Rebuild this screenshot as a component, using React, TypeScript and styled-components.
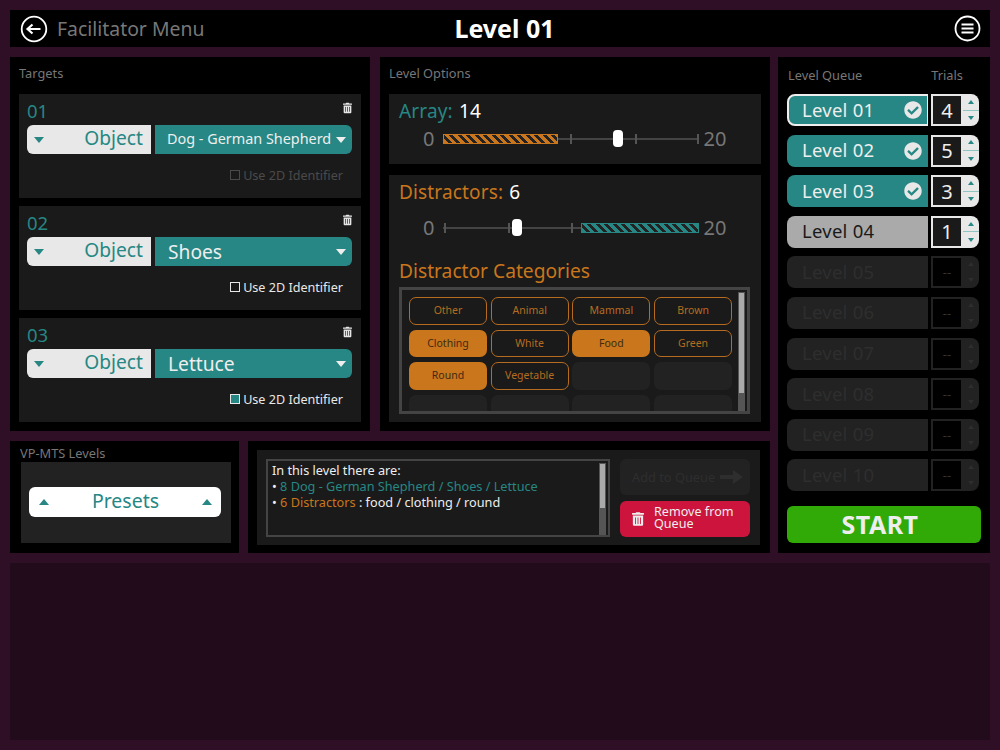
import React from "react";
import styled, { createGlobalStyle } from "styled-components";
import { FaCheckCircle, FaTrashAlt } from "react-icons/fa";

const TEAL = "#268784";
const ORANGE = "#c9761c";

const Global = createGlobalStyle`
  html, body { margin: 0; padding: 0; background: #2e0f26; }
  body { font-family: "Noto Sans", "Open Sans", sans-serif; }
  * { box-sizing: border-box; }
`;

const Page = styled.div`
  width: 1000px; height: 750px; padding: 10px; display: flex; flex-direction: column; gap: 10px;
  background: #2e0f26; overflow: hidden;
`;
const Header = styled.header`
  height: 37px; flex: none; background: #000; display: grid; grid-template-columns: 1fr auto 1fr;
  align-items: center; padding: 0 9px 0 10px;
`;
const HeaderLeft = styled.div`display: flex; align-items: center; gap: 9px;`;
const BackLabel = styled.span`color: #777; font-size: 19.4px;`;
const HeaderTitle = styled.h1`margin: 0 0 0 8px; color: #fff; font-size: 25px; font-weight: 700; line-height: 37px;`;
const HeaderRight = styled.div`display: flex; justify-content: flex-end;`;

const Main = styled.div`display: grid; grid-template-columns: 760px 212px; column-gap: 8px; height: 496px; flex: none;`;
const LeftCol = styled.div`display: flex; flex-direction: column; gap: 10px;`;
const TopRow = styled.div`display: flex; gap: 10px; height: 374px;`;
const BottomRow = styled.div`display: flex; gap: 9px; height: 112px;`;
const Panel = styled.section<{ $w: number }>`
  width: ${p => p.$w}px; flex: none; background: #000; padding: 0 9px; display: flex; flex-direction: column;
`;
const PanelTitle = styled.div`height: 37px; line-height: 33px; color: #777; font-size: 12.8px;`;
const Stack = styled.div`display: flex; flex-direction: column; gap: 8px;`;

const TargetCard = styled.div`height: 104px; background: #1a1a1a; padding: 5px 9px 0 8px;`;
const CardHead = styled.div`display: flex; justify-content: space-between; align-items: flex-start; height: 26px;`;
const CardNum = styled.span`color: ${TEAL}; font-size: 18.5px; line-height: 23px;`;
const TrashIcon = styled(FaTrashAlt)`color: #e6e6e6; width: 9px; height: 12px; margin-top: 3px;`;
const SelectRow = styled.div`display: flex; gap: 4px; height: 29px;`;
const ObjectSelect = styled.div`
  width: 124px; background: #e8e8e8; border-radius: 6px 0 0 6px; display: flex; align-items: center;
  justify-content: space-between; padding: 0 8px 4px 7px; color: ${TEAL}; font-size: 19.2px;
  & > span { margin-top: 4px; }
`;
const ValueSelect = styled.div<{ $small?: boolean }>`
  flex: 1; background: ${TEAL}; border-radius: 0 6px 6px 0; display: flex; align-items: center;
  justify-content: space-between; padding: 0 6px ${p => (p.$small ? 3 : 0)}px ${p => (p.$small ? 12 : 13)}px; color: #eee; white-space: nowrap;
  font-size: ${p => (p.$small ? 14.4 : 19.2)}px;
  & > span { margin-top: ${p => (p.$small ? 3 : 0)}px; }
`;
const Caret = styled.span<{ $color: string; $up?: boolean; $w?: number; $h?: number }>`
  display: block; width: 0; height: 0; flex: none;
  border-left: ${p => p.$w ?? 5}px solid transparent; border-right: ${p => p.$w ?? 5}px solid transparent;
  ${p => (p.$up ? "border-bottom" : "border-top")}: ${p => p.$h ?? 6}px solid ${p => p.$color};
`;
const CheckRow = styled.div<{ $dim?: boolean }>`
  display: flex; justify-content: flex-end; align-items: center; gap: 3px; height: 22px; margin-top: 10px; padding-right: 9px;
  color: ${p => (p.$dim ? "#4a4a4a" : "#e8e8e8")}; font-size: 12.6px;
`;
const CheckBox = styled.span<{ $dim?: boolean; $on?: boolean }>`
  width: 10px; height: 10px; border: 1.5px solid ${p => (p.$dim ? "#4a4a4a" : "#e8e8e8")};
  background: ${p => (p.$on ? TEAL : "transparent")};
`;

const OptionCard = styled.div<{ $h: number; $gap?: boolean }>`
  height: ${p => p.$h}px; background: #1a1a1a; padding: 4px 10px 0 10px;
  margin-top: ${p => (p.$gap ? 11 : 0)}px; display: flex; flex-direction: column;
`;
const OptionTitle = styled.div<{ $color: string }>`
  color: ${p => p.$color}; font-size: 19px; line-height: 26px; letter-spacing: 0.15px;
  & b { font-weight: 400; color: #fff; margin-left: 1px; }
`;
const SliderRow = styled.div<{ $low?: boolean }>`
  display: flex; align-items: center; height: 26px; margin-top: ${p => (p.$low ? 10 : 2)}px; padding-left: 24px;
`;
const SliderEnd = styled.span`color: #777; font-size: 20px; line-height: 26px;`;
const Track = styled.div`position: relative; width: 255px; height: 20px; margin: 0 5px 0 9px;
  &::before { content: ""; position: absolute; left: 0; right: 0; top: 9px; height: 2px; background: #444; }
`;
const Tick = styled.span<{ $x: number }>`position: absolute; left: ${p => p.$x}px; top: 5px; width: 1.5px; height: 10px; background: #555;`;
const Fill = styled.span<{ $x: number; $w: number; $color: string }>`
  position: absolute; left: ${p => p.$x}px; width: ${p => p.$w}px; top: 5px; height: 10px;
  border: 1px solid ${p => p.$color};
  background: repeating-linear-gradient(45deg, ${p => p.$color} 0 3px, #222 3px 6px);
`;
const Thumb = styled.span<{ $x: number }>`
  position: absolute; left: ${p => p.$x}px; top: 1px; width: 10px; height: 17px; border-radius: 4px; background: #fff;
`;
const CategoryTitle = styled.div`color: ${ORANGE}; font-size: 19.2px; line-height: 28px; margin-top: 16px;`;
const CategoryBox = styled.div`
  width: 351px; height: 127px; margin-top: 2px; border: 3px solid #444; padding: 7px 0 0 7px; position: relative; overflow: hidden;
`;
const ChipGrid = styled.div`display: grid; grid-template-columns: repeat(4, 78px); grid-auto-rows: 27.7px; column-gap: 3.7px; row-gap: 5px;`;
const Chip = styled.div<{ $on?: boolean; $empty?: boolean }>`
  border-radius: 7px; display: flex; align-items: center; justify-content: center; font-size: 10.5px; padding-bottom: 2px;
  color: ${p => (p.$on ? "#3f2a12" : "#b56c20")};
  background: ${p => (p.$on ? ORANGE : p.$empty ? "#222" : "transparent")};
  border: ${p => (p.$on || p.$empty ? "none" : "1.5px solid #b56c20")};
`;
const Scrollbar = styled.div<{ $thumb: number }>`
  position: absolute; right: 2px; top: 2px; bottom: 0; width: 7px; background: #555;
  &::after { content: ""; position: absolute; left: 1px; right: 1px; top: 1px; height: ${p => p.$thumb}px; background: #aaa; }
`;

const QueueList = styled.div`display: flex; flex-direction: column; gap: 8.6px;`;
const QueueHead = styled.div`display: flex; justify-content: space-between; height: 37px; line-height: 37px; color: #777; font-size: 12.8px; padding-right: 18px; padding-left: 1px;`;
const QueueRow = styled.div`display: flex; height: 32px; gap: 3px; width: 192px;`;
const LevelButton = styled.div<{ $kind: "done" | "active" | "current" | "off" }>`
  width: 141px; display: flex; align-items: center; justify-content: space-between; padding: 0 6px 2px 15px; font-size: 18.5px;
  border-radius: 8px 0 0 8px; letter-spacing: 0.25px;
  background: ${p => (p.$kind === "off" ? "#222" : p.$kind === "current" ? "#aaa" : TEAL)};
  color: ${p => (p.$kind === "off" ? "#2e2e2e" : p.$kind === "current" ? "#1a1a1a" : "#eee")};
  ${p => (p.$kind === "active" ? "border: 2px solid #eee; border-right-width: 1px; padding: 0 5px 2px 13px;" : "")}
  & > svg { margin-top: 2px; }
`;
const DoneIcon = styled(FaCheckCircle)`color: #e8e8e8; width: 18px; height: 18px;`;
const Stepper = styled.div<{ $off?: boolean }>`
  width: 48px; display: flex; border-radius: 0 8px 8px 0; overflow: hidden; background: ${p => (p.$off ? "#222" : "#e8e8e8")};
`;
const StepValue = styled.div<{ $off?: boolean }>`
  width: 32px; border: 2px solid ${p => (p.$off ? "#222" : "#e8e8e8")}; background: ${p => (p.$off ? "#000" : "#1a1a1a")};
  color: ${p => (p.$off ? "#333" : "#eee")}; font-size: ${p => (p.$off ? 13 : 20)}px; display: flex; align-items: center; justify-content: center;
`;
const StepArrows = styled.div`flex: 1; display: flex; flex-direction: column;`;
const StepArrow = styled.div<{ $line?: boolean }>`
  flex: 1; display: flex; align-items: center; justify-content: center; border-bottom: ${p => (p.$line ? "1px solid #8fc4c2" : "none")};
`;
const StartButton = styled.div`
  margin-top: 15px; width: 194px; height: 37px; background: #31a906; border-radius: 6px; color: #eee; font-size: 25px; font-weight: 700;
  display: flex; align-items: center; justify-content: center; padding: 0 8px 2px 0; letter-spacing: 0.5px;
`;

const PresetPanel = styled.section`width: 229px; background: #000; padding: 0 8px 10px 11px; display: flex; flex-direction: column;`;
const PresetTitle = styled.div`height: 21px; line-height: 25px; color: #777; font-size: 12.8px; margin-left: -1px;`;
const PresetCard = styled.div`flex: 1; background: #222; display: flex; align-items: center; padding: 0 10px 2px 8px;`;
const PresetButton = styled.div`
  width: 192px; height: 30px; background: #fff; border-radius: 6px; display: flex; align-items: center; justify-content: space-between;
  padding: 0 9px 2px 10px; color: ${TEAL}; font-size: 19.5px;
  & > span { margin-top: 3px; }
`;
const InfoPanel = styled.section`width: 522px; background: #000; padding: 9px 10px 8px 9px; display: flex;`;
const InfoCard = styled.div`flex: 1; background: #1a1a1a; display: flex; padding: 9px 9px 8px 9px; gap: 10px;`;
const InfoBox = styled.div`
  width: 344px; border: 2px solid #444; position: relative; padding: 1px 4px; color: #eee; font-size: 12.7px; line-height: 16px;
`;
const InfoText = styled.span<{ $color: string }>`color: ${p => p.$color};`;
const Actions = styled.div`width: 130px; flex: none; display: flex; flex-direction: column; gap: 6px;`;
const AddButton = styled.div`
  height: 36px; background: #222; border-radius: 6px; color: #2e2e2e; font-size: 12.8px; display: flex; align-items: center; gap: 5px; padding: 0 0 1px 12px;
`;
const RemoveButton = styled.div`
  height: 36px; background: #cc143c; border-radius: 6px; color: #eee; font-size: 12.6px; line-height: 11.5px; display: flex; align-items: center; gap: 10px; padding: 0 0 3px 12px;
`;
const RemoveIcon = styled(FaTrashAlt)`width: 12px; height: 16px; color: #eee; margin-top: 3px;`;
const Footer = styled.div`flex: 1; background: #220c1c;`;

const BackIcon = () => (
  <svg width="28" height="28" viewBox="0 0 28 28" fill="none" stroke="#fff">
    <circle cx="14" cy="14" r="12.3" strokeWidth="1.8" />
    <path d="M7.5 14H20.5M12.5 9.5L7.5 14L12.5 18.5" strokeWidth="2.2" />
  </svg>
);
const MenuIcon = () => (
  <svg width="27" height="27" viewBox="0 0 27 27" fill="none" stroke="#fff">
    <circle cx="13.5" cy="13.5" r="12" strokeWidth="1.8" />
    <path d="M7.5 9.5H19.5M7.5 13.5H19.5M7.5 17.5H19.5" strokeWidth="2.2" />
  </svg>
);
const ArrowIcon = () => (
  <svg width="23" height="14" viewBox="0 0 23 14" fill="#2e2e2e"><path d="M0 5H13V0L23 7L13 14V9H0Z" /></svg>
);

const targets = [
  { n: "01", value: "Dog - German Shepherd", small: true, dim: true, on: false },
  { n: "02", value: "Shoes", small: false, dim: false, on: false },
  { n: "03", value: "Lettuce", small: false, dim: false, on: true },
];
const chips = [
  ["Other"], ["Animal"], ["Mammal"], ["Brown"],
  ["Clothing", 1], ["White"], ["Food", 1], ["Green"],
  ["Round", 1], ["Vegetable"], [""], [""],
  [""], [""], [""], [""],
] as [string, number?][];
const levels: { name: string; kind: "done" | "active" | "current" | "off"; trials: string }[] = [
  { name: "Level 01", kind: "active", trials: "4" },
  { name: "Level 02", kind: "done", trials: "5" },
  { name: "Level 03", kind: "done", trials: "3" },
  { name: "Level 04", kind: "current", trials: "1" },
  ...["05", "06", "07", "08", "09", "10"].map(n => ({ name: `Level ${n}`, kind: "off" as const, trials: "--" })),
];

export default function App() {
  return (
    <Page>
      <Global />
      <Header>
        <HeaderLeft><BackIcon /><BackLabel>Facilitator Menu</BackLabel></HeaderLeft>
        <HeaderTitle>Level 01</HeaderTitle>
        <HeaderRight><MenuIcon /></HeaderRight>
      </Header>
      <Main>
        <LeftCol>
          <TopRow>
            <Panel $w={360}>
              <PanelTitle>Targets</PanelTitle>
              <Stack>
                {targets.map(t => (
                  <TargetCard key={t.n}>
                    <CardHead><CardNum>{t.n}</CardNum><TrashIcon /></CardHead>
                    <SelectRow>
                      <ObjectSelect><Caret $color={TEAL} />Object</ObjectSelect>
                      <ValueSelect $small={t.small}>{t.value}<Caret $color="#eee" /></ValueSelect>
                    </SelectRow>
                    <CheckRow $dim={t.dim}><CheckBox $dim={t.dim} $on={t.on} />Use 2D Identifier</CheckRow>
                  </TargetCard>
                ))}
              </Stack>
            </Panel>
            <Panel $w={390}>
              <PanelTitle>Level Options</PanelTitle>
              <OptionCard $h={70}>
                <OptionTitle $color={TEAL}>Array: <b>14</b></OptionTitle>
                <SliderRow>
                  <SliderEnd>0</SliderEnd>
                  <Track>
                    <Tick $x={127} /><Tick $x={192} /><Tick $x={254} />
                    <Fill $x={0} $w={115} $color={ORANGE} />
                    <Thumb $x={170} />
                  </Track>
                  <SliderEnd>20</SliderEnd>
                </SliderRow>
              </OptionCard>
              <OptionCard $h={247} $gap>
                <OptionTitle $color={ORANGE}>Distractors: <b>6</b></OptionTitle>
                <SliderRow $low>
                  <SliderEnd>0</SliderEnd>
                  <Track>
                    <Tick $x={1} /><Tick $x={65} /><Tick $x={128} />
                    <Fill $x={138} $w={118} $color={TEAL} />
                    <Thumb $x={69} />
                  </Track>
                  <SliderEnd>20</SliderEnd>
                </SliderRow>
                <CategoryTitle>Distractor Categories</CategoryTitle>
                <CategoryBox>
                  <ChipGrid>
                    {chips.map(([label, on], i) => (
                      <Chip key={i} $on={!!on} $empty={!label}>{label}</Chip>
                    ))}
                  </ChipGrid>
                  <Scrollbar $thumb={100} />
                </CategoryBox>
              </OptionCard>
            </Panel>
          </TopRow>
          <BottomRow>
            <PresetPanel>
              <PresetTitle>VP-MTS Levels</PresetTitle>
              <PresetCard>
                <PresetButton><Caret $color={TEAL} $up />Presets<Caret $color={TEAL} $up /></PresetButton>
              </PresetCard>
            </PresetPanel>
            <InfoPanel>
              <InfoCard>
                <InfoBox>
                  In this level there are:<br />
                  • <InfoText $color={TEAL}>8 Dog - German Shepherd / Shoes / Lettuce</InfoText><br />
                  • <InfoText $color={ORANGE}>6 Distractors</InfoText> : food / clothing / round
                  <Scrollbar $thumb={44} />
                </InfoBox>
                <Actions>
                  <AddButton>Add to Queue<ArrowIcon /></AddButton>
                  <RemoveButton><RemoveIcon /><span>Remove from<br />Queue</span></RemoveButton>
                </Actions>
              </InfoCard>
            </InfoPanel>
          </BottomRow>
        </LeftCol>
        <Panel $w={212}>
          <QueueHead><span>Level Queue</span><span>Trials</span></QueueHead>
          <QueueList>
            {levels.map(l => {
              const off = l.kind === "off";
              const arrow = off ? "#2e2e2e" : TEAL;
              return (
                <QueueRow key={l.name}>
                  <LevelButton $kind={l.kind}>{l.name}{(l.kind === "done" || l.kind === "active") && <DoneIcon />}</LevelButton>
                  <Stepper $off={off}>
                    <StepValue $off={off}>{l.trials}</StepValue>
                    <StepArrows>
                      <StepArrow $line={!off}><Caret $color={arrow} $up $w={3.75} $h={4} /></StepArrow>
                      <StepArrow><Caret $color={arrow} $w={3.75} $h={4} /></StepArrow>
                    </StepArrows>
                  </Stepper>
                </QueueRow>
              );
            })}
          </QueueList>
          <StartButton>START</StartButton>
        </Panel>
      </Main>
      <Footer />
    </Page>
  );
}
